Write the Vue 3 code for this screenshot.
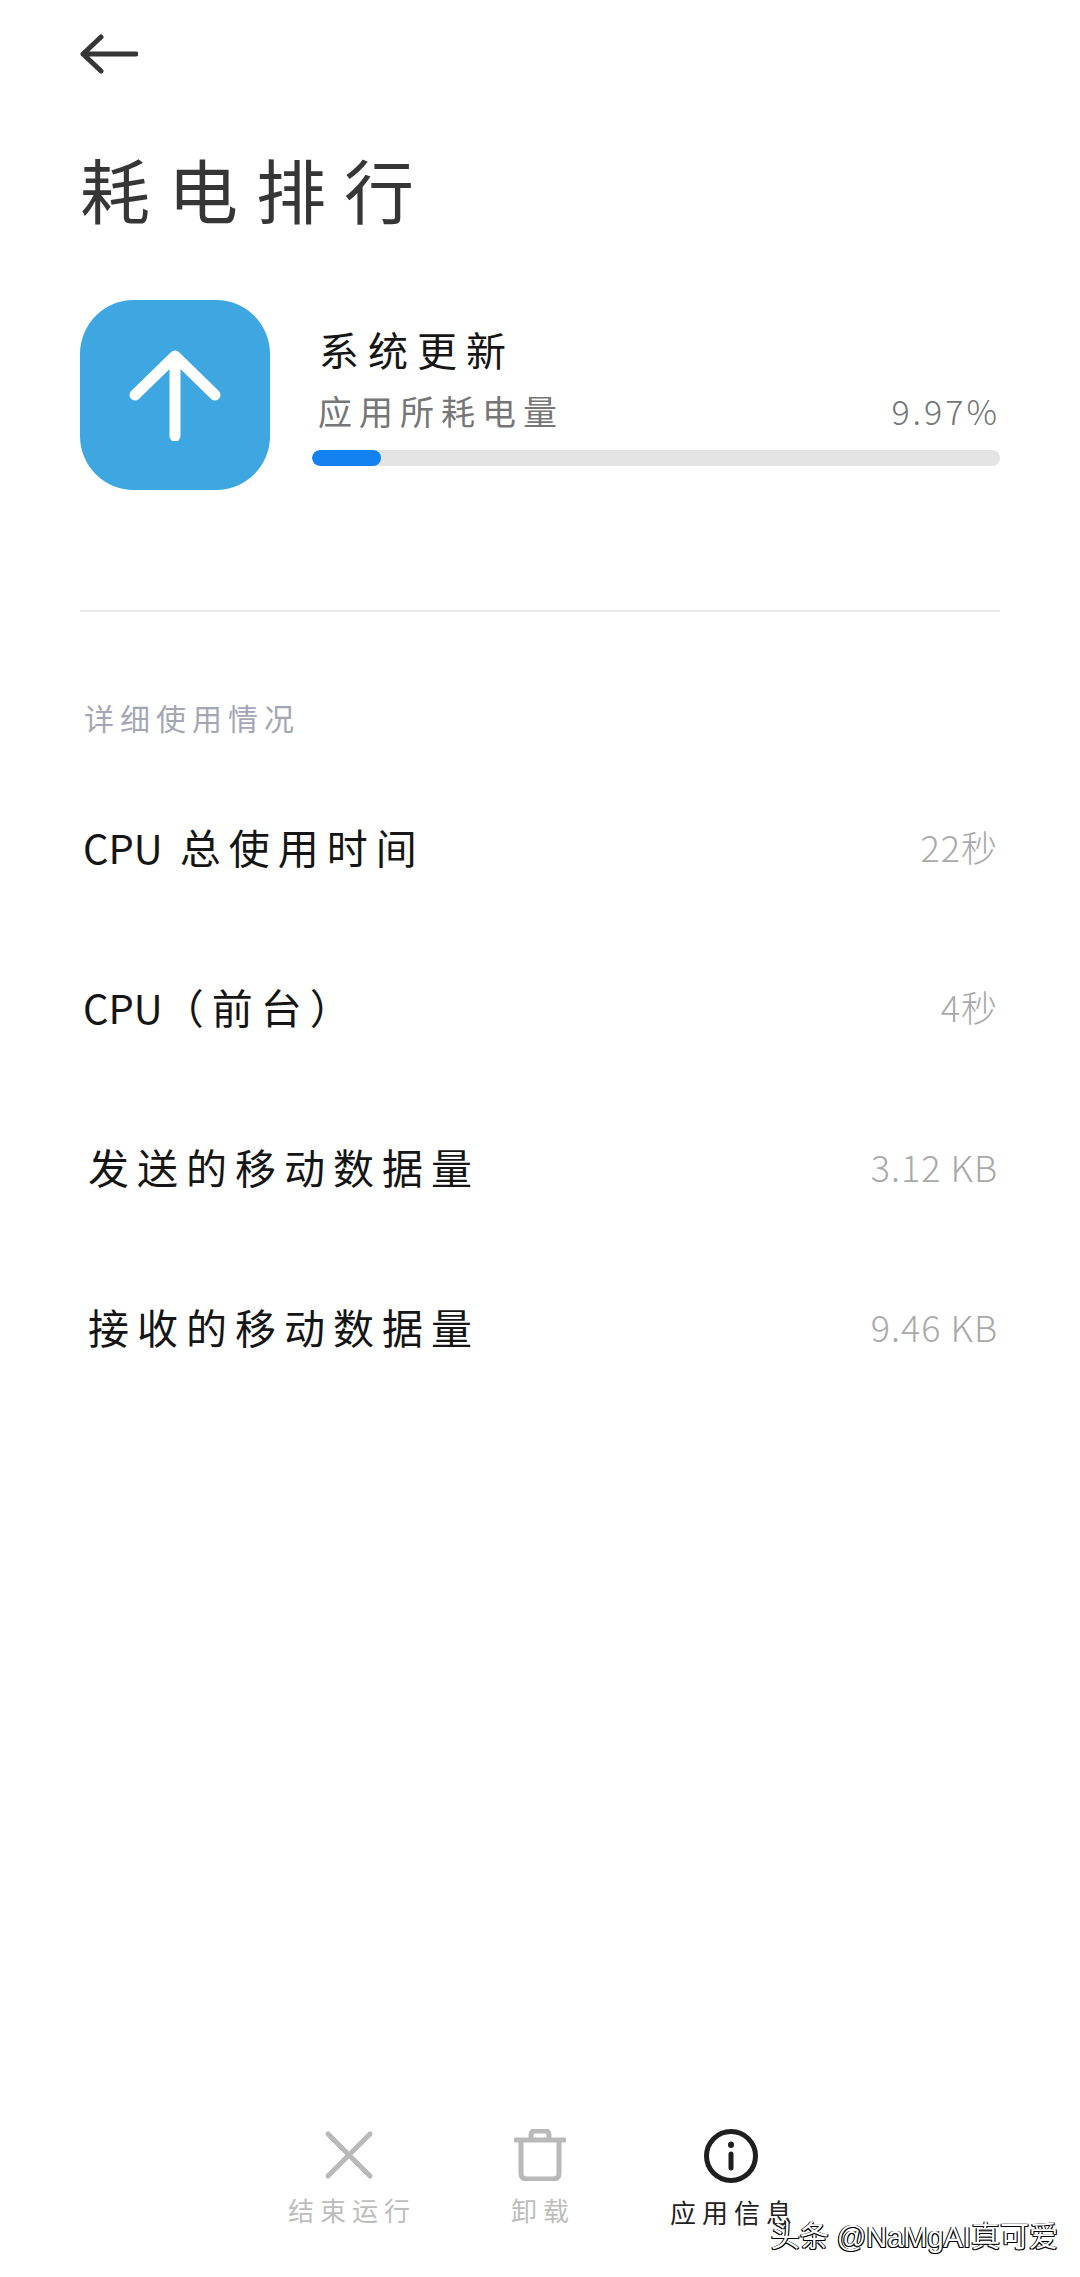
<script setup>
const rows = [
  { latin: 'CPU', label: ' 总使用时间', value: '22秒' },
  { latin: 'CPU', label: '（前台）', value: '4秒' },
  { label: '发送的移动数据量', value: '3.12 KB', inset: true },
  { label: '接收的移动数据量', value: '9.46 KB', inset: true },
]
const usage = 10
</script>

<template>
  <div class="page">
    <button class="back" aria-label="返回">
      <svg width="58" height="40" viewBox="0 0 58 40" fill="none" stroke="#363636" stroke-width="5" stroke-linecap="round" stroke-linejoin="round">
        <path d="M21 3 3 20l18 17M3 20h53" />
      </svg>
    </button>

    <h1 class="title">耗电排行</h1>

    <section class="app">
      <div class="app-icon">
        <svg width="92" height="92" viewBox="0 0 92 92" fill="none" stroke="#fff" stroke-width="11" stroke-linecap="round" stroke-linejoin="round">
          <path d="M6 46 46 7l40 39M46 9v78" />
        </svg>
      </div>
      <div class="app-info">
        <div class="app-name">系统更新</div>
        <div class="app-sub">
          <span>应用所耗电量</span>
          <span class="pct">9.97%</span>
        </div>
        <div class="bar">
          <div class="bar-fill" :style="{ width: usage + '%' }"></div>
        </div>
      </div>
    </section>

    <div class="divider"></div>

    <div class="section-label">详细使用情况</div>

    <ul class="rows">
      <li v-for="row in rows" :key="row.value" class="row">
        <span class="row-label" :class="{ inset: row.inset }"><span v-if="row.latin" class="latin">{{ row.latin }}</span>{{ row.label }}</span>
        <span class="row-value">{{ row.value }}</span>
      </li>
    </ul>

    <nav class="actions">
      <div class="action">
        <svg width="52" height="52" viewBox="0 0 52 52" fill="none" stroke="#b9b9b9" stroke-width="5" stroke-linecap="round">
          <path d="M5 5 47 47M47 5 5 47" />
        </svg>
        <span class="action-label">结束运行</span>
      </div>
      <div class="action">
        <svg width="52" height="52" viewBox="0 0 52 52" fill="none" stroke="#b9b9b9" stroke-width="5" stroke-linecap="round" stroke-linejoin="round">
          <path d="M2 11h48M7 11v33q0 6 6 6h26q6 0 6-6V11M17 11V6q0-4 4-4h10q4 0 4 4v5" />
        </svg>
        <span class="action-label">卸载</span>
      </div>
      <div class="action active">
        <svg width="54" height="54" viewBox="0 0 54 54" fill="none" stroke="#1f1f1f" stroke-linecap="round">
          <circle cx="27" cy="27" r="24.5" stroke-width="5" />
          <path d="M27 25v14" stroke-width="5" />
          <path d="M27 15.5v.5" stroke-width="6" />
        </svg>
        <span class="action-label">应用信息</span>
      </div>
    </nav>

    <div class="watermark">头条 @NaMgAI真可爱</div>
  </div>
</template>

<style>
html,
body {
  margin: 0;
  background: #fff;
}
</style>

<style scoped>
.page {
  position: relative;
  box-sizing: border-box;
  width: 1080px;
  height: 2277px;
  padding: 34px 80px 0;
  display: flex;
  flex-direction: column;
  background: #fff;
  font-family: "Noto Sans CJK SC", "Noto Sans", sans-serif;
  color: #222;
  overflow: hidden;
}
.back {
  display: block;
  width: 58px;
  height: 40px;
  padding: 0;
  border: 0;
  background: none;
}
.back svg {
  display: block;
}
.title {
  margin: 69px 0 0;
  font-size: 70px;
  line-height: 92px;
  font-weight: 400;
  letter-spacing: 18px;
  color: #363636;
}
.app {
  display: flex;
  align-items: flex-start;
  margin-top: 65px;
}
.app-icon {
  flex: none;
  width: 190px;
  height: 190px;
  border-radius: 54px;
  background: #3ea6e0;
  display: flex;
  align-items: center;
  justify-content: center;
}
.app-info {
  flex: 1;
  margin-left: 42px;
  padding-top: 23px;
}
.app-name {
  padding-left: 7px;
  font-size: 40px;
  line-height: 52px;
  letter-spacing: 9px;
  color: #151515;
}
.app-sub {
  display: flex;
  justify-content: space-between;
  align-items: center;
  margin-top: 11px;
  padding-left: 6px;
  font-size: 34px;
  line-height: 50px;
  letter-spacing: 7px;
  color: #767676;
}
.pct {
  font-size: 34px;
  letter-spacing: 3px;
  font-weight: 300;
}
.bar {
  height: 16px;
  margin-top: 14px;
  border-radius: 8px;
  background: #e4e4e4;
  overflow: hidden;
}
.bar-fill {
  height: 100%;
  border-radius: 8px;
  background: #1481f0;
}
.divider {
  height: 2px;
  margin-top: 120px;
  background: #e9e9e9;
}
.section-label {
  margin-top: 83px;
  padding-left: 4px;
  font-size: 30px;
  line-height: 44px;
  letter-spacing: 6px;
  color: #a3a7b4;
}
.rows {
  list-style: none;
  margin: 27px 0 0;
  padding: 0;
}
.row {
  display: flex;
  justify-content: space-between;
  align-items: center;
  height: 160px;
}
.row-label {
  padding-left: 3px;
  font-size: 41px;
  letter-spacing: 8px;
  color: #151515;
  white-space: pre;
}
.row-label.inset {
  padding-left: 8px;
}
.latin {
  font-size: 40px;
  letter-spacing: 0;
}
.row-value {
  padding-right: 2px;
  font-size: 36px;
  letter-spacing: 1px;
  color: #a9a9a9;
  font-weight: 300;
}
.actions {
  position: absolute;
  left: 0;
  right: 0;
  top: 2129px;
  display: flex;
  justify-content: center;
}
.action {
  width: 191px;
  display: flex;
  flex-direction: column;
  align-items: center;
  gap: 11px;
  font-size: 26px;
  line-height: 36px;
  letter-spacing: 6px;
  color: #bdbdbd;
}
.action-label {
  padding-left: 6px;
}
.action.active {
  color: #222;
}
.watermark {
  position: absolute;
  right: 22px;
  bottom: 22px;
  font-family: "Liberation Sans", "Noto Sans CJK SC", sans-serif;
  font-size: 29px;
  line-height: 36px;
  white-space: nowrap;
  color: #fff;
  text-shadow: -1px 1px 0 #000, -1px 0 0 #000, 1px 1px 0 #000, 1px 0 0 #222;
}
</style>
